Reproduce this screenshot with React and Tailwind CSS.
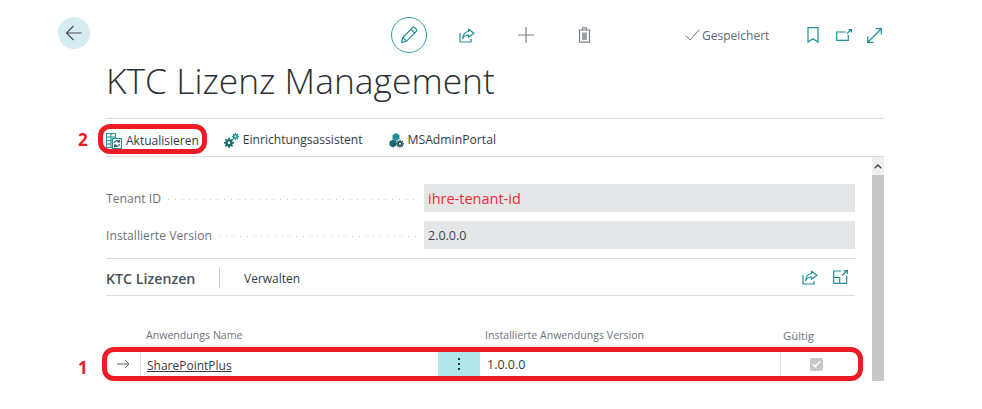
const TEAL = '#1f8f98';
const SLATE = '#78818a';

function Back() {
  return (
    <svg width="18" height="18" viewBox="0 0 18 18" fill="none" stroke="#4a4f55" strokeWidth="1.2">
      <path d="M16.5 9H1.5M8.5 2 1.5 9l7 7" />
    </svg>
  );
}

function Pencil() {
  return (
    <svg width="18" height="18" viewBox="0 0 18 18" fill="none" stroke={TEAL} strokeWidth="1.2" strokeLinejoin="round">
      <path d="M1.5 16.5 2.8 11.5 12.6 1.7a1.6 1.6 0 0 1 2.3 0l1.4 1.4a1.6 1.6 0 0 1 0 2.3L6.5 15.2z" />
      <path d="M2.8 11.5l3.7 3.7M11 3.3l3.7 3.7" />
    </svg>
  );
}

function ShareIcon() {
  return (
    <svg width="16" height="15" viewBox="0 0 16 15" fill="none" stroke={TEAL} strokeWidth="1.2" strokeLinejoin="round">
      <path d="M1 5v9h11v-3" />
      <path d="M9.5 1.2 15 5.2 9.5 9.2V7C7 7 5 8 3.6 10.5 4 6.6 6 3.9 9.5 3.5z" />
    </svg>
  );
}

function OpenNew() {
  return (
    <svg width="16" height="12" viewBox="0 0 16 12" fill="none" stroke={TEAL} strokeWidth="1.2">
      <path d="M10 3H.7v8.3h11.6V6" />
      <path d="M11 4.5 15 .8M12.5.6H15.4V3.4" />
    </svg>
  );
}

function Expand() {
  return (
    <svg width="15" height="15" viewBox="0 0 15 15" fill="none" stroke={TEAL} strokeWidth="1.2">
      <path d="M1 14 14 1M8.5.7h5.8v5.8M.7 8.5v5.8h5.8" />
    </svg>
  );
}

function Collapse() {
  return (
    <svg width="15" height="14" viewBox="0 0 15 14" fill="none" stroke={TEAL} strokeWidth="1.2">
      <path d="M8 1H.7v12.3h13V6" />
      <path d="M.7 7.5h6v5.8M9 5.5l5-4.7M10.8.6h3.6v3.4" />
    </svg>
  );
}

function TableRefresh() {
  return (
    <svg width="16" height="16" viewBox="0 0 16 16" fill="none" strokeWidth="1.1">
      <path d="M.5.5h9v14h-9zM.5 4h9M.5 7.5h9M.5 11h5M5 .5v14" stroke={TEAL} />
      <path d="M6.5 5.5h9v10h-9z" fill="#fff" stroke={TEAL} />
      <path d="M8.5 10a2.6 2.6 0 0 1 4.6-1.4M13.5 11a2.6 2.6 0 0 1-4.6 1.4" stroke="#27555a" />
      <path d="M13.4 6.8v2.1h-2M8.6 14.2v-2.1h2" stroke="#27555a" />
    </svg>
  );
}

function Gear({ x, y, r, color }) {
  const teeth = [0, 45, 90, 135];
  return (
    <g fill={color}>
      <path
        fillRule="evenodd"
        d={`M${x - r} ${y}a${r} ${r} 0 1 0 ${r * 2} 0a${r} ${r} 0 1 0 ${-r * 2} 0zM${x - r * 0.38} ${y}a${r * 0.38} ${r * 0.38} 0 1 0 ${r * 0.76} 0a${r * 0.38} ${r * 0.38} 0 1 0 ${-r * 0.76} 0z`}
      />
      {teeth.map((a) => (
        <rect key={a} x={x - r * 1.4} y={y - r * 0.24} width={r * 0.55} height={r * 0.48} transform={`rotate(${a} ${x} ${y})`} />
      ))}
      {teeth.map((a) => (
        <rect key={a} x={x + r * 0.85} y={y - r * 0.24} width={r * 0.55} height={r * 0.48} transform={`rotate(${a} ${x} ${y})`} />
      ))}
    </g>
  );
}

function Gears() {
  return (
    <svg width="15" height="15" viewBox="0 0 15 15">
      <Gear x={5} y={9.8} r={3.6} color="#17696f" />
      <Gear x={11.5} y={3.5} r={2.5} color="#1f8f98" />
    </svg>
  );
}

function AdminCubes() {
  return (
    <svg width="15" height="15" viewBox="0 0 15 15">
      <path d="M7 0 10.5 2v4L7 8 3.5 6V2z" fill="#1f8f98" />
      <path d="M4 6.5 7.5 8.5v4L4 14.5.5 12.5v-4z" fill="#17696f" />
      <Gear x={11} y={10.8} r={2.8} color="#27555a" />
    </svg>
  );
}

function CheckMark() {
  return (
    <svg width="15" height="12" viewBox="0 0 15 12" fill="none" stroke="#6f777f" strokeWidth="1">
      <path d="M.7 6.5 5 11 14.3.7" />
    </svg>
  );
}

function Header() {
  return (
    <div className="flex items-center h-[36px] mt-[17px] pl-[58px]">
      <button className="w-[32px] h-[32px] rounded-full bg-[#d5edf0] flex items-center justify-center -mt-[4px]">
        <Back />
      </button>
      <button className="ml-[301px] w-[36px] h-[36px] rounded-full border border-[#2f9ea6] flex items-center justify-center">
        <Pencil />
      </button>
      <div className="ml-[32px] flex"><ShareIcon /></div>
      <svg className="ml-[42px]" width="18" height="18" viewBox="0 0 18 18" fill="none" stroke={SLATE} strokeWidth="1.2">
        <path d="M9 1v16M1 9h16" />
      </svg>
      <svg className="ml-[43px]" width="13" height="16" viewBox="0 0 13 16" fill="none" stroke={SLATE} strokeWidth="1.2">
        <path d="M1.5 3v12.2h10V3zM.5 3h12M4.5 3V.8h4V3" />
        <path d="M4 5.5h5v7.5H4z" fill={SLATE} stroke="none" opacity="0.75" />
      </svg>
      <div className="ml-[94px] flex items-center gap-[2px]">
        <CheckMark />
        <span className="text-[12px] text-[#5f6973] pt-[2px]">Gespeichert</span>
      </div>
      <svg className="ml-[38px]" width="12" height="16" viewBox="0 0 12 16" fill="none" stroke={TEAL} strokeWidth="1.2">
        <path d="M1 .7h10v14.4l-5-3.4-5 3.4z" />
      </svg>
      <div className="ml-[17px] flex"><OpenNew /></div>
      <div className="ml-[15px] flex"><Expand /></div>
    </div>
  );
}

function ActionBar() {
  return (
    <div className="ml-[106px] w-[778px] h-[39px] pt-[6px] border-y border-[#dcdcdc] flex items-center text-[12px] text-[#333b42]">
      <div className="flex items-center gap-[4px]">
        <TableRefresh />
        <span>Aktualisieren</span>
      </div>
      <div className="ml-[25px] flex items-center gap-[4px]">
        <Gears />
        <span className="text-[12.1px]">Einrichtungsassistent</span>
      </div>
      <div className="ml-[26px] flex items-center gap-[4px]">
        <AdminCubes />
        <span className="text-[12.2px]">MSAdminPortal</span>
      </div>
    </div>
  );
}

function Field({ label, value, valueClass }) {
  return (
    <div className="flex items-center h-[28px]">
      <span className="text-[12.2px] text-[#6b747d] whitespace-nowrap pt-[3px]">{label}</span>
      <div className="flex-1 h-px mt-[2px] mx-[7px] bg-[repeating-linear-gradient(90deg,#c6cacd_0,#c6cacd_1px,transparent_1px,transparent_7px)]" />
      <div className={`w-[431px] h-[28px] bg-[#e5e6e8] flex items-center pl-[4px] pt-[2px] ${valueClass}`}>{value}</div>
    </div>
  );
}

function LicenseTable() {
  return (
    <div className="mt-[31px]">
      <div className="flex h-[18px] items-center text-[10.6px] text-[#6b747d]">
        <span className="ml-[40px] w-[339px]">Anwendungs Name</span>
        <span className="w-[298px]">Installierte Anwendungs Version</span>
        <span className="text-[11.3px]">Gültig</span>
      </div>
      <div className="flex h-[26px] mt-[6px] items-stretch text-[#333b42]">
        <div className="w-[35px] flex items-center justify-center border-r border-[#dfe1e3]">
          <svg width="13" height="10" viewBox="0 0 13 10" fill="none" stroke="#5d656c" strokeWidth="1">
            <path d="M0 5h12M8 1l4 4-4 4" />
          </svg>
        </div>
        <div className="w-[297px] pl-[6px] pt-[3px] flex items-center underline text-[12px]">SharePointPlus</div>
        <div className="w-[42px] bg-[#b0e8ec] flex flex-col items-center justify-center gap-[3px]">
          <span className="w-[2px] h-[2px] bg-[#23343a]" />
          <span className="w-[2px] h-[2px] bg-[#23343a]" />
          <span className="w-[2px] h-[2px] bg-[#23343a]" />
        </div>
        <div className="w-[301px] pl-[7px] pt-[3px] flex items-center border-r border-[#dfe1e3] text-[12.5px]">1.0.0.0</div>
        <div className="flex-1 flex items-center pl-[29px]">
          <div className="w-[13px] h-[13px] rounded-[2px] bg-[#c8c8c8] flex items-center justify-center">
            <svg width="9" height="8" viewBox="0 0 9 8" fill="none" stroke="#fff" strokeWidth="1.4">
              <path d="M.7 4.2 3.2 6.7 8.3 1" />
            </svg>
          </div>
        </div>
      </div>
    </div>
  );
}

function Scrollbar() {
  return (
    <div className="w-[12px] flex flex-col">
      <div className="h-[18px] bg-[#f0f0f0] flex items-center justify-center">
        <svg width="8" height="5" viewBox="0 0 8 5" fill="none" stroke="#444" strokeWidth="1.4">
          <path d="M.7 4.3 4 1l3.3 3.3" />
        </svg>
      </div>
      <div className="flex-1 bg-[#c8c8c8]" />
    </div>
  );
}

export default function App() {
  return (
    <div className="relative w-[982px] h-[409px] overflow-hidden bg-white font-['Open_Sans',sans-serif]">
      <Header />
      <h1 className="ml-[106px] mt-[2px] h-[63px] text-[35.4px] leading-[50px] font-light text-[#2b2f33]">KTC Lizenz Management</h1>
      <ActionBar />
      <div className="ml-[106px] w-[778px] h-[224px] flex justify-between">
        <div className="w-[749px] pt-[27px]">
          <div className="flex flex-col gap-[9px]">
            <Field label="Tenant ID" value="ihre-tenant-id" valueClass="text-[14.5px] text-[#ee2a35]" />
            <Field label="Installierte Version" value="2.0.0.0" valueClass="text-[12.5px] text-[#3c4349]" />
          </div>
          <div className="mt-[9px] h-[38px] border-y border-[#dcdcdc] flex items-center">
            <span className="w-[113px] text-[14.2px] font-semibold text-[#4a535c] pt-[3px]">KTC Lizenzen</span>
            <div className="w-px h-[21px] bg-[#c8ccd0]" />
            <span className="ml-[24px] text-[12px] text-[#333b42] pt-[3px]">Verwalten</span>
            <div className="ml-auto mr-[7px] flex items-center gap-[15px]">
              <ShareIcon />
              <Collapse />
            </div>
          </div>
          <LicenseTable />
        </div>
        <Scrollbar />
      </div>

      {/* red annotations on top of the screenshot */}
      <div className="absolute left-[98px] top-[124px] w-[109px] h-[30px] border-[5px] border-[#ed1c24] rounded-[12px]" />
      <div className="absolute left-[102px] top-[347px] w-[761px] h-[34px] border-[5px] border-[#ed1c24] rounded-[12px]" />
      <span className="absolute left-[78px] top-[129px] text-[17px] leading-[22px] font-bold text-[#ed1c24]">2</span>
      <span className="absolute left-[78px] top-[357px] text-[17px] leading-[22px] font-bold text-[#ed1c24]">1</span>
    </div>
  );
}
